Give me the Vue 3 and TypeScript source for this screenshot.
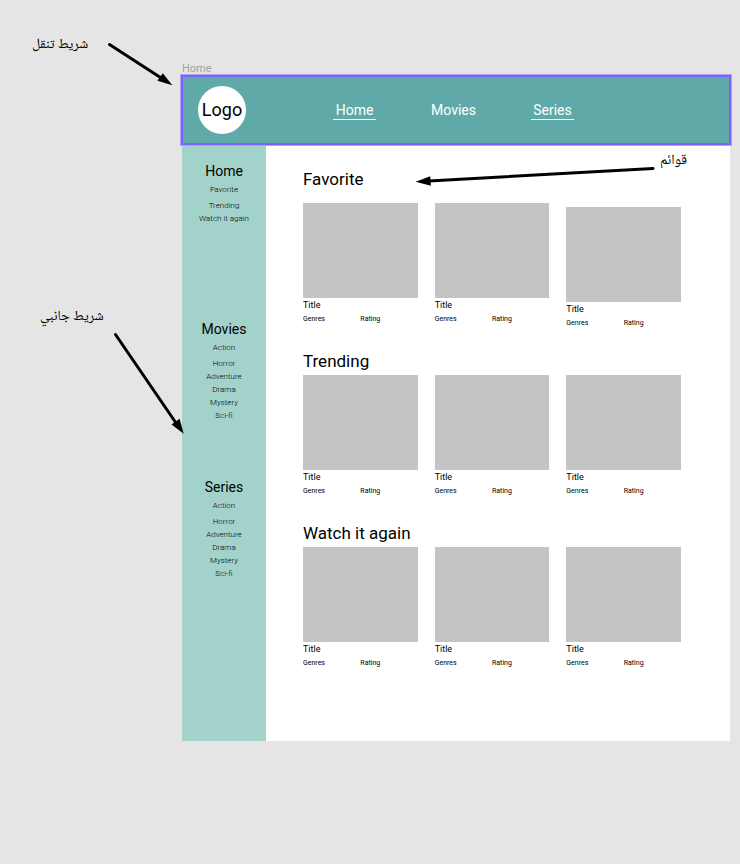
<script setup lang="ts">
interface NavLink {
  label: string
  underlined: boolean
}

interface SideGroup {
  title: string
  lead: string
  items: string[]
}

interface Card {
  title: string
  genres: string
  rating: string
  lowered: boolean
}

interface Shelf {
  title: string
  spacious: boolean
  cards: Card[]
}

const navLinks: NavLink[] = [
  { label: 'Home', underlined: true },
  { label: 'Movies', underlined: false },
  { label: 'Series', underlined: true },
]

const genreItems: string[] = ['Horror', 'Adventure', 'Drama', 'Mystery', 'Sci-fi']

const sideGroups: SideGroup[] = [
  { title: 'Home', lead: 'Favorite', items: ['Trending', 'Watch it again'] },
  { title: 'Movies', lead: 'Action', items: genreItems },
  { title: 'Series', lead: 'Action', items: genreItems },
]

function makeCards(loweredIndex = -1): Card[] {
  return [0, 1, 2].map((i) => ({
    title: 'Title',
    genres: 'Genres',
    rating: 'Rating',
    lowered: i === loweredIndex,
  }))
}

const shelves: Shelf[] = [
  { title: 'Favorite', spacious: true, cards: makeCards(2) },
  { title: 'Trending', spacious: false, cards: makeCards() },
  { title: 'Watch it again', spacious: false, cards: makeCards() },
]
</script>

<template>
  <div class="canvas">
    <p class="frame-label">Home</p>

    <div class="frame">
      <header class="topbar">
        <div class="logo">Logo</div>
        <nav class="topnav">
          <a
            v-for="link in navLinks"
            :key="link.label"
            href="#"
            class="topnav-link"
            :class="{ underlined: link.underlined }"
          >{{ link.label }}</a>
        </nav>
      </header>

      <div class="body">
        <aside class="sidebar">
          <section v-for="group in sideGroups" :key="group.title" class="group">
            <h2 class="group-title">{{ group.title }}</h2>
            <a href="#" class="side-link lead">{{ group.lead }}</a>
            <a v-for="item in group.items" :key="item" href="#" class="side-link">{{ item }}</a>
          </section>
        </aside>

        <main class="content">
          <section v-for="shelf in shelves" :key="shelf.title" class="shelf">
            <h2 class="shelf-title" :class="{ spacious: shelf.spacious }">{{ shelf.title }}</h2>
            <div class="cards">
              <article
                v-for="(card, i) in shelf.cards"
                :key="i"
                class="card"
                :class="{ lowered: card.lowered }"
              >
                <div class="poster"></div>
                <h3 class="card-title">{{ card.title }}</h3>
                <div class="meta">
                  <span>{{ card.genres }}</span>
                  <span>{{ card.rating }}</span>
                </div>
              </article>
            </div>
          </section>
        </main>
      </div>
    </div>

    <p class="note note-navbar" lang="ar" dir="rtl">شريط تنقل</p>
    <p class="note note-sidebar" lang="ar" dir="rtl">شريط جانبي</p>
    <p class="note note-lists" lang="ar" dir="rtl">قوائم</p>

    <svg class="arrows" width="740" height="864" viewBox="0 0 740 864" aria-hidden="true">
      <g stroke="#000" stroke-width="3" stroke-linecap="round">
        <path d="M109.5 44.5L162 78.5" />
        <path d="M653 168.5L429 181" />
        <path d="M115.5 334.5L176 423" />
      </g>
      <path d="M172.3 85.3L157.4 80.8L162.8 73.2Z" />
      <path d="M415.6 181.7L430.3 176.2L430.9 185.7Z" />
      <path d="M183.7 433.8L171.5 424.4L179.6 418.8Z" />
    </svg>
  </div>
</template>

<style>
body {
  margin: 0;
  background: #e5e5e5;
}
</style>

<style scoped>
.canvas {
  position: relative;
  box-sizing: border-box;
  min-height: 100vh;
  padding: 62px 10px 0 182px;
  overflow: hidden;
  background: #e5e5e5;
  color: #000;
  font-family: Roboto, "Liberation Sans", sans-serif;
}

p,
h2,
h3 {
  margin: 0;
  font-weight: 400;
}

a {
  color: inherit;
  text-decoration: none;
}

.frame-label {
  color: #a3a3a3;
  font-size: 11px;
  line-height: 14px;
}

.frame {
  background: #fff;
}

.topbar {
  position: relative;
  display: flex;
  align-items: center;
  height: 68px;
  padding-left: 16px;
  box-sizing: border-box;
  background: #5faaa8;
  outline: 2px solid #7b61ff;
  outline-offset: -1px;
  box-shadow: 0 0 0 2px #b0a3f2;
}

.logo {
  width: 48px;
  height: 48px;
  border-radius: 50%;
  background: #fff;
  font-size: 18px;
  line-height: 48px;
  text-align: center;
}

.topnav {
  display: flex;
  gap: 56px;
  margin-left: 87px;
}

.topnav-link {
  width: 43px;
  display: flex;
  justify-content: center;
  border-bottom: 1px solid transparent;
  color: #fff;
  font-size: 14px;
  line-height: 18px;
}

.topnav-link.underlined {
  border-bottom-color: #fff;
}

.body {
  display: flex;
}

.sidebar {
  flex: 0 0 84px;
  box-sizing: border-box;
  padding-top: 18px;
  background: #a3d2ca;
  text-align: center;
}

.group {
  display: flex;
  flex-direction: column;
  min-height: 158px;
}

.group-title {
  margin-bottom: 3px;
  font-size: 14px;
  line-height: 18px;
}

.side-link {
  font-size: 8px;
  font-weight: 300;
  line-height: 13px;
}

.side-link.lead {
  margin-bottom: 3px;
}

.content {
  flex: 1;
  padding: 25px 49px 68px 37px;
}

.shelf + .shelf {
  margin-top: 22px;
}

.shelf-title {
  margin-bottom: 4px;
  font-size: 17px;
  line-height: 20px;
}

.shelf-title.spacious {
  margin-bottom: 14px;
}

.cards {
  display: grid;
  grid-template-columns: repeat(3, 1fr);
  gap: 17px;
  min-height: 126px;
}

.card.lowered {
  margin-top: 4px;
}

.poster {
  height: 95px;
  background: #c4c4c4;
}

.card-title {
  font-size: 9px;
  line-height: 15px;
}

.meta {
  display: grid;
  grid-template-columns: 1fr 1fr;
  font-size: 7px;
  line-height: 12px;
}

.note {
  position: absolute;
  font-family: "Noto Naskh Arabic", "DejaVu Sans", sans-serif;
  font-size: 14px;
  line-height: 20px;
  white-space: nowrap;
}

.note-navbar {
  top: 35px;
  left: 32px;
}

.note-sidebar {
  top: 307px;
  left: 40px;
}

.note-lists {
  top: 151px;
  left: 660px;
}

.arrows {
  position: absolute;
  top: 0;
  left: 0;
  pointer-events: none;
}
</style>
